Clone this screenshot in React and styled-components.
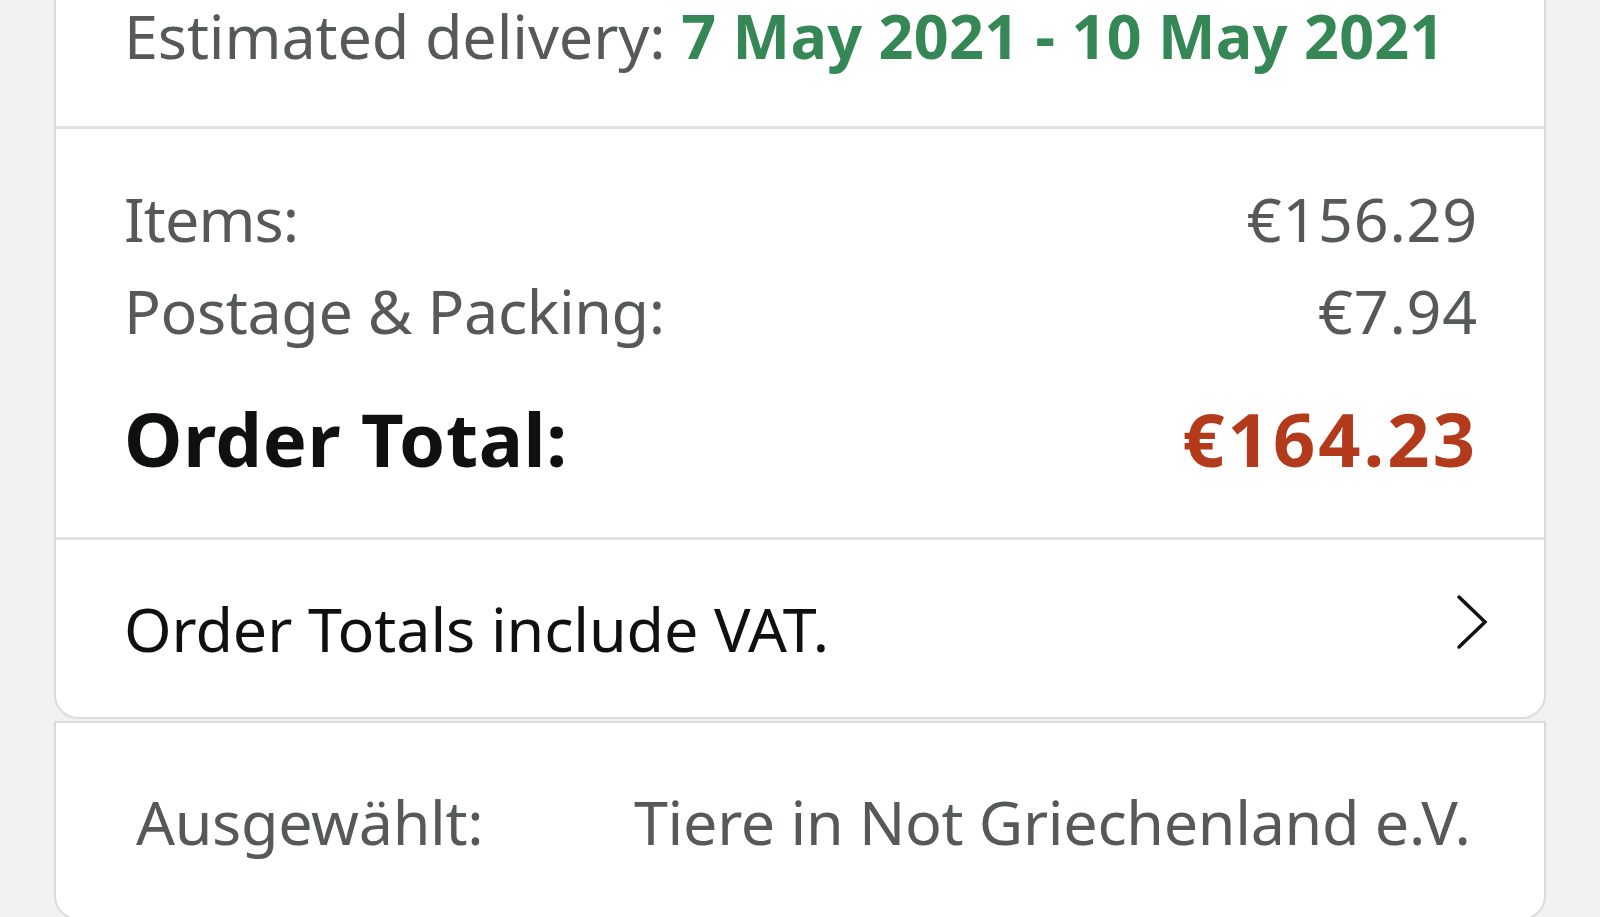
import React from "react";
import styled, { createGlobalStyle } from "styled-components";

const GlobalStyle = createGlobalStyle`
  html, body {
    margin: 0;
    padding: 0;
    background: #f2f2f2;
    overflow: hidden;
  }
  body {
    font-family: "Noto Sans", "Open Sans", sans-serif;
    -webkit-font-smoothing: antialiased;
  }
`;

const Page = styled.div`
  padding: 0 54px;
  height: 917px;
  box-sizing: border-box;
`;

const Card = styled.div`
  background: #fff;
  border: 2px solid #d9dcdc;
  border-top: ${(p) => (p.$open ? "none" : "2px solid #d9dcdc")};
  border-radius: 0 0 24px 24px;
  box-sizing: border-box;
  margin-bottom: ${(p) => p.$gap || 0}px;
`;

const Section = styled.div`
  padding: ${(p) => p.$pad || "0 66px"};
  border-bottom: ${(p) => (p.$last ? "none" : "3px solid #dfe2e2")};
`;

const Line = styled.div`
  display: flex;
  justify-content: space-between;
  align-items: center;
  font-size: 61px;
  line-height: ${(p) => p.$lh || 92}px;
  letter-spacing: -0.1px;
  color: ${(p) => p.$color || "#565959"};
`;

const TotalLine = styled(Line)`
  font-size: 74px;
  line-height: 100px;
  font-weight: 700;
  color: #0f1111;
  margin-top: 32px;
  letter-spacing: 0.6px;
`;

const Label = styled.span`
  letter-spacing: ${(p) => p.$spacing ?? -0.1}px;
`;

const Green = styled.span`
  color: #368756;
  font-weight: 700;
  letter-spacing: 0.3px;
`;

const Price = styled.span`
  color: ${(p) => p.$color || "inherit"};
  letter-spacing: ${(p) => p.$spacing || 0.8}px;
`;

const Chevron = styled.svg`
  width: 36px;
  height: 60px;
  margin-right: -12px;
  margin-top: -14px;
`;

const Chosen = styled.div`
  display: grid;
  grid-template-columns: 498px 1fr;
  padding: 53px 0 50px 80px;
  font-size: 61px;
  line-height: 92px;
  letter-spacing: -0.3px;
  color: #565959;
`;

export default function App() {
  return (
    <>
      <GlobalStyle />
      <Page>
        <Card $open $gap={2}>
          <Section $pad="0 66px 54px 68px">
            <Line $lh={72}>
              <span>
                Estimated delivery: <Green>7 May 2021 - 10 May 2021</Green>
              </span>
            </Line>
          </Section>
          <Section $pad="44px 66px 48px 68px">
            <Line>
              <Label $spacing={-0.9}>Items:</Label>
              <Price>€156.29</Price>
            </Line>
            <Line>
              <Label $spacing={-0.4}>Postage &amp; Packing:</Label>
              <Price>€7.94</Price>
            </Line>
            <TotalLine>
              <span>Order Total:</span>
              <Price $color="#b43a1c" $spacing={3}>
                €164.23
              </Price>
            </TotalLine>
          </Section>
          <Section $pad="43px 66px 42px 68px" $last>
            <Line $color="#0f1111">
              <span>Order Totals include VAT.</span>
              <Chevron viewBox="0 0 36 60">
                <path
                  d="M5 5 L31 30 L5 55"
                  fill="none"
                  stroke="#111"
                  strokeWidth="3.5"
                  strokeLinecap="round"
                  strokeLinejoin="miter"
                />
              </Chevron>
            </Line>
          </Section>
        </Card>
        <Card>
          <Chosen>
            <span>Ausgewählt:</span>
            <span>Tiere in Not Griechenland e.V.</span>
          </Chosen>
        </Card>
      </Page>
    </>
  );
}
